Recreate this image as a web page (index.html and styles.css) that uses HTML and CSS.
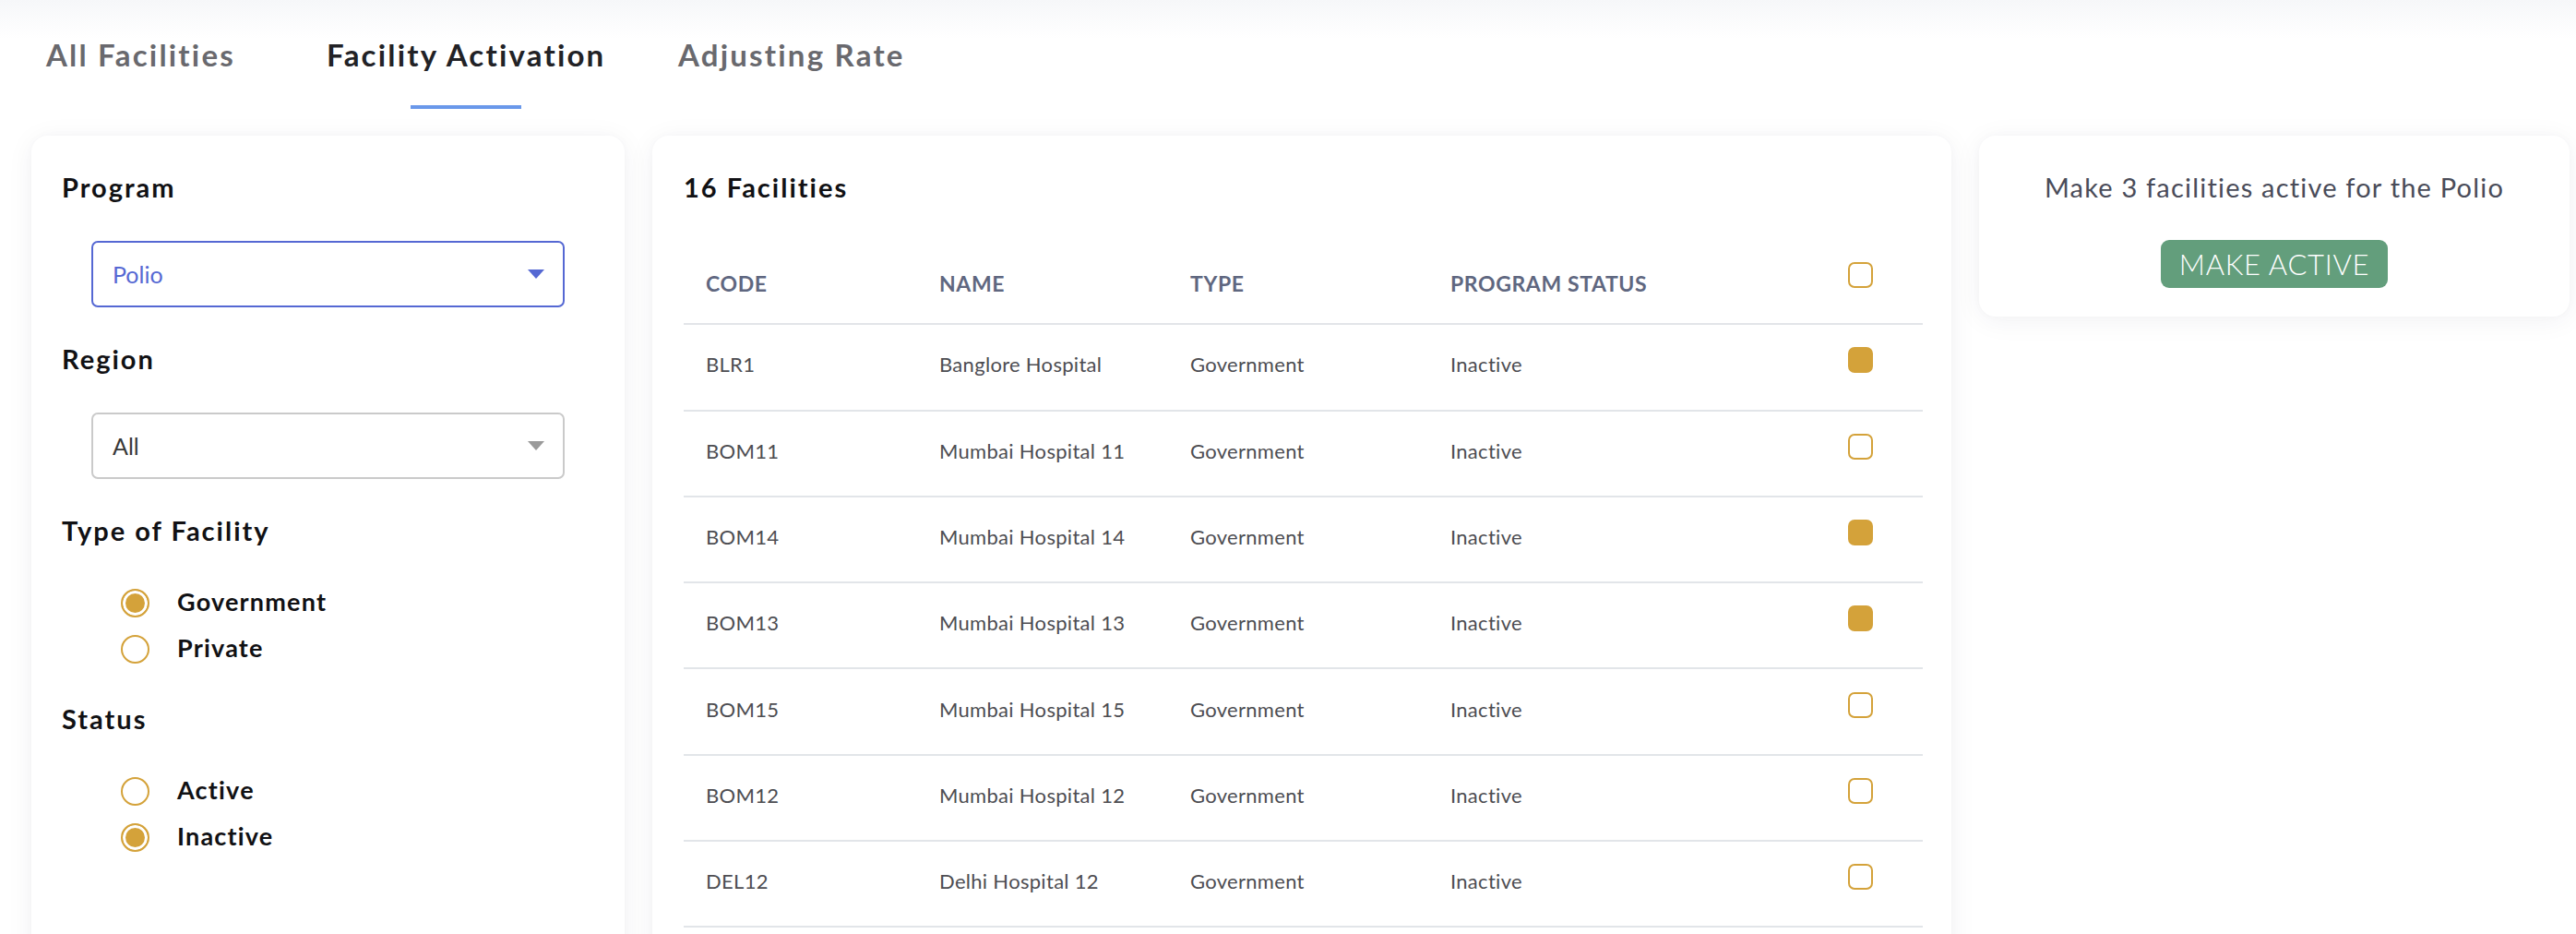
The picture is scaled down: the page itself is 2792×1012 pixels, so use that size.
FILE: index.html
```html
<!DOCTYPE html>
<html lang="en">
<head>
<meta charset="utf-8">
<title>Facility Activation</title>
<link rel="stylesheet" href="styles.css">
</head>
<body>
<div class="page">
  <nav class="tabs">
    <div class="tab tab-1">All Facilities</div>
    <div class="tab tab-2"><span class="tab-label active">Facility Activation</span></div>
    <div class="tab tab-3">Adjusting Rate</div>
  </nav>

  <main class="content">
    <aside class="card filters">
      <h2 class="heading">Program</h2>
      <div class="select select-active">
        <span class="select-value">Polio</span>
        <span class="caret caret-blue"></span>
      </div>

      <h2 class="heading">Region</h2>
      <div class="select">
        <span class="select-value">All</span>
        <span class="caret caret-grey"></span>
      </div>

      <h2 class="heading">Type of Facility</h2>
      <ul class="radios">
        <li class="radio-row"><span class="radio checked"></span><span class="radio-label">Government</span></li>
        <li class="radio-row"><span class="radio"></span><span class="radio-label">Private</span></li>
      </ul>

      <h2 class="heading heading-status">Status</h2>
      <ul class="radios">
        <li class="radio-row"><span class="radio"></span><span class="radio-label">Active</span></li>
        <li class="radio-row"><span class="radio checked"></span><span class="radio-label">Inactive</span></li>
      </ul>
    </aside>

    <section class="card facilities">
      <h2 class="heading">16 Facilities</h2>
      <div class="table">
        <div class="row head">
          <div class="cell">CODE</div>
          <div class="cell">NAME</div>
          <div class="cell">TYPE</div>
          <div class="cell">PROGRAM STATUS</div>
          <div class="cell check-cell"><span class="checkbox head-box"></span></div>
        </div>
        <div class="row">
          <div class="cell">BLR1</div><div class="cell">Banglore Hospital</div><div class="cell">Government</div><div class="cell">Inactive</div>
          <div class="cell check-cell"><span class="checkbox checked"></span></div>
        </div>
        <div class="row">
          <div class="cell">BOM11</div><div class="cell">Mumbai Hospital 11</div><div class="cell">Government</div><div class="cell">Inactive</div>
          <div class="cell check-cell"><span class="checkbox"></span></div>
        </div>
        <div class="row">
          <div class="cell">BOM14</div><div class="cell">Mumbai Hospital 14</div><div class="cell">Government</div><div class="cell">Inactive</div>
          <div class="cell check-cell"><span class="checkbox checked"></span></div>
        </div>
        <div class="row">
          <div class="cell">BOM13</div><div class="cell">Mumbai Hospital 13</div><div class="cell">Government</div><div class="cell">Inactive</div>
          <div class="cell check-cell"><span class="checkbox checked"></span></div>
        </div>
        <div class="row">
          <div class="cell">BOM15</div><div class="cell">Mumbai Hospital 15</div><div class="cell">Government</div><div class="cell">Inactive</div>
          <div class="cell check-cell"><span class="checkbox"></span></div>
        </div>
        <div class="row">
          <div class="cell">BOM12</div><div class="cell">Mumbai Hospital 12</div><div class="cell">Government</div><div class="cell">Inactive</div>
          <div class="cell check-cell"><span class="checkbox"></span></div>
        </div>
        <div class="row">
          <div class="cell">DEL12</div><div class="cell">Delhi Hospital 12</div><div class="cell">Government</div><div class="cell">Inactive</div>
          <div class="cell check-cell"><span class="checkbox"></span></div>
        </div>
      </div>
    </section>

    <section class="card action">
      <p class="action-text">Make 3 facilities active for the Polio</p>
      <button class="btn-activate" type="button">MAKE ACTIVE</button>
    </section>
  </main>
</div>
</body>
</html>
```

FILE: styles.css
```css
* { box-sizing: border-box; }

html, body {
  margin: 0;
  padding: 0;
  height: 1012px;
  overflow: hidden;
  background: #ffffff;
  font-family: "Lato", "Liberation Sans", sans-serif;
}

.page {
  height: 1012px;
  overflow: hidden;
  background: linear-gradient(to bottom, #f6f7f9 0px, #ffffff 42px);
}

/* ---------- tabs ---------- */
.tabs {
  display: flex;
  padding: 39px 0 0 50px;
  height: 118px;
}

.tab {
  font-size: 33px;
  line-height: 40px;
  font-weight: 700;
  letter-spacing: 2.2px;
  color: #69696e;
  white-space: nowrap;
}

.tab-1 { width: 304px; }
.tab-2 { width: 381px; }

.tab-label { position: relative; display: inline-block; }

.tab-label.active { color: #222226; }

.tab-label.active::after {
  content: "";
  position: absolute;
  left: 50%;
  top: 75px;
  width: 120px;
  height: 4px;
  margin-left: -60px;
  background: #6a98ea;
}

/* ---------- layout ---------- */
.content {
  display: flex;
  align-items: flex-start;
  gap: 30px;
  padding: 29px 8px 0 34px;
}

.card {
  background: #ffffff;
  border-radius: 18px;
  box-shadow: 0 4px 30px rgba(30, 40, 70, 0.06), 0 0 10px rgba(30, 40, 70, 0.025);
}

.heading {
  margin: 0;
  font-size: 29px;
  line-height: 36px;
  font-weight: 700;
  letter-spacing: 2px;
  color: #111114;
}

/* ---------- filters ---------- */
.filters {
  width: 643px;
  min-height: 900px;
  flex: none;
  padding: 38px 33px 0 33px;
}

.select {
  display: flex;
  align-items: center;
  justify-content: space-between;
  width: 513px;
  height: 72px;
  margin: 40px 0 38px 32px;
  padding: 0 20px 0 21px;
  border: 2px solid #cacaca;
  border-radius: 7px;
}

.select-active { border-color: #5568d3; }

.select-value {
  font-size: 25px;
  color: #383838;
}

.select-active .select-value { color: #5568d3; }

.caret {
  width: 0;
  height: 0;
  border-left: 9px solid transparent;
  border-right: 9px solid transparent;
  border-top: 10px solid #9a9a9a;
}

.caret-blue { border-top-color: #5568d3; }

.radios {
  list-style: none;
  margin: 35px 0 0 0;
  padding: 0 0 0 64px;
}

.radios + .heading { margin-top: 33px; }

.radio-row {
  display: flex;
  align-items: center;
  height: 50px;
}

.radio {
  width: 31px;
  height: 31px;
  border: 2px solid #d4a23a;
  border-radius: 50%;
  flex: none;
  margin-right: 30px;
}

.radio.checked {
  background: #d4a23a;
  box-shadow: inset 0 0 0 3px #ffffff;
}

.radio-label {
  font-size: 27px;
  font-weight: 700;
  letter-spacing: 1.2px;
  padding-bottom: 3px;
  color: #111114;
}

/* ---------- facilities table ---------- */
.facilities {
  width: 1408px;
  min-height: 900px;
  flex: none;
  padding: 38px 31px 0 34px;
}

.table { margin-top: 38px; }

.row {
  display: grid;
  grid-template-columns: 253px 272px 282px 455px 80px;
  height: 93.3px;
  border-bottom: 2px solid #e2e5e9;
  align-items: center;
  padding-bottom: 6px;
  font-size: 22px;
  letter-spacing: 0.3px;
  color: #4d4d52;
}

.row.head {
  padding-top: 5px;
  padding-bottom: 0;
  font-size: 23px;
  font-weight: 700;
  letter-spacing: 0.6px;
  color: #5f6780;
}

.cell {
  padding-left: 24px;
  white-space: nowrap;
}

.check-cell {
  padding-left: 0;
  display: flex;
  margin-bottom: 9px;
}

.head .check-cell { margin-bottom: 18px; }

.checkbox {
  display: block;
  width: 27px;
  height: 28px;
  border: 2px solid #d4a23a;
  border-radius: 7px;
}

.checkbox.checked { background: #d4a23a; }

/* ---------- action card ---------- */
.action {
  width: 640px;
  flex: none;
  padding: 38px 0 31px 0;
  display: flex;
  flex-direction: column;
  align-items: center;
}

.action-text {
  margin: 0;
  font-size: 29px;
  line-height: 36px;
  font-weight: 400;
  letter-spacing: 1.2px;
  color: #4a4c59;
}

.btn-activate {
  margin-top: 39px;
  height: 52px;
  padding: 0 20px;
  border: none;
  border-radius: 9px;
  background: #639e7c;
  color: #ffffff;
  font-family: "Lato", "Liberation Sans", sans-serif;
  font-size: 31px;
  font-weight: 300;
  letter-spacing: 0.7px;
  line-height: 52px;
}
```
